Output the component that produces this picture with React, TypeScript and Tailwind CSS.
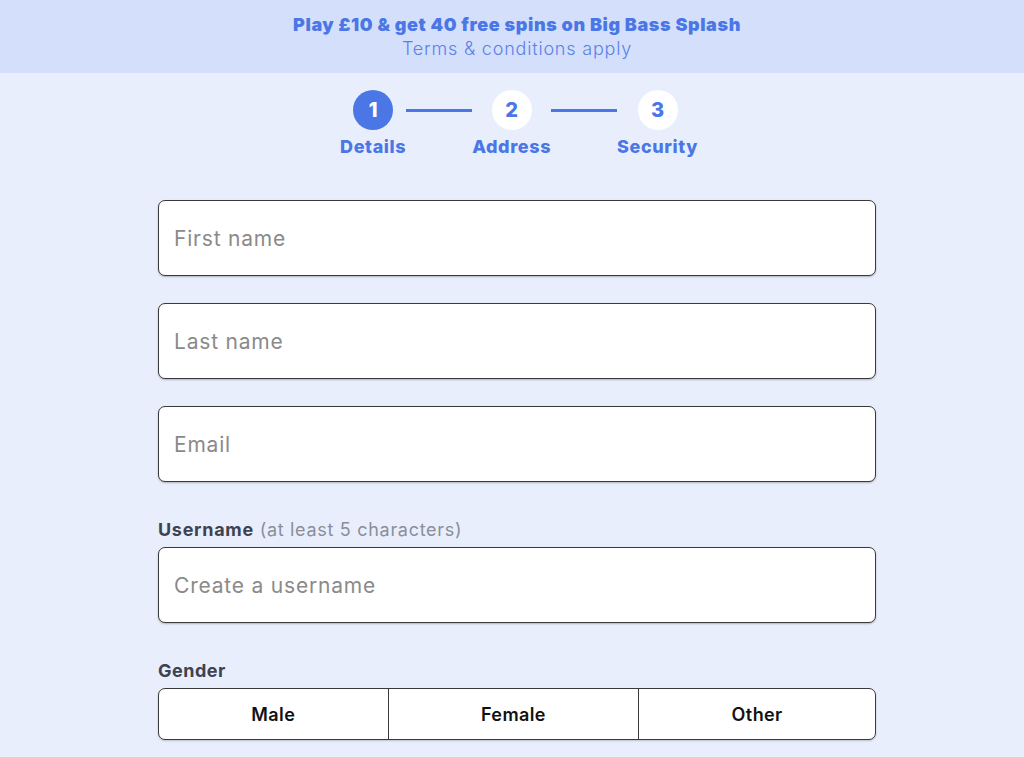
const steps = [
  { num: "1", label: "Details", active: true },
  { num: "2", label: "Address", active: false },
  { num: "3", label: "Security", active: false },
];

const genders = ["Male", "Female", "Other"];

const Field = ({ placeholder }: { placeholder: string }) => (
  <input
    type="text"
    placeholder={placeholder}
    className="w-full h-[76px] rounded-[7px] border border-[#3a3a3a] bg-white px-[15px] text-[21px] tracking-[0.8px] text-[#222] placeholder:text-[#8a8a8a] shadow-[0_1px_2px_rgba(0,0,0,0.25)] outline-none"
  />
);

const App = () => {
  return (
    <div
      className="min-h-[757px] bg-[#e9eefd]"
      style={{ fontFamily: '"Inter", "Open Sans", sans-serif' }}
    >
      {/* Promo banner */}
      <div className="h-[73px] bg-[#d4dffb] pl-[10px] pt-[12px] text-center">
        <p className="text-[18px] leading-[26px] font-black text-[#4a76e6] tracking-[0.6px]">
          Play £10 &amp; get 40 free spins on Big Bass Splash
        </p>
        <p className="text-[18px] leading-[21px] font-light text-[#5a82e6] tracking-[0.8px]">
          Terms &amp; conditions apply
        </p>
      </div>

      {/* Stepper */}
      <div className="flex justify-center items-start pl-[14px] pt-[17px]">
        {steps.map((step, i) => (
          <div key={step.num} className="flex items-start">
            {i > 0 && <div className="w-[66px] h-[3px] mt-[19px] bg-[#4a76e6]" />}
            <div className="flex flex-col items-center">
              <div
                className={
                  step.active
                    ? "w-[40px] h-[40px] rounded-full bg-[#4a76e6] text-white flex items-center justify-center text-[20px] font-extrabold"
                    : "w-[40px] h-[40px] rounded-full bg-white text-[#4a76e6] flex items-center justify-center text-[20px] font-extrabold"
                }
              >
                {step.num}
              </div>
              <span className="mt-[6px] text-[18px] leading-[22px] font-extrabold tracking-[0.6px] text-[#4a76e6]">
                {step.label}
              </span>
            </div>
          </div>
        ))}
      </div>

      {/* Form */}
      <div className="flex justify-center pl-[10px] pt-[42px]">
        <form className="w-[718px] flex flex-col">
          <div className="flex flex-col gap-[27px]">
            <Field placeholder="First name" />
            <Field placeholder="Last name" />
            <Field placeholder="Email" />
          </div>

          <label className="mt-[37px] mb-[6px] text-[18px] leading-[22px] tracking-[0.7px] text-[#3d4350]">
            <span className="font-bold">Username</span>{" "}
            <span className="text-[#8a8f99]">(at least 5 characters)</span>
          </label>
          <Field placeholder="Create a username" />

          <label className="mt-[37px] mb-[6px] text-[18px] leading-[22px] tracking-[0.5px] font-bold text-[#3d4350]">
            Gender
          </label>
          <div className="flex h-[52px] rounded-[7px] border border-[#3a3a3a] bg-white overflow-hidden shadow-[0_1px_2px_rgba(0,0,0,0.2)]">
            {genders.map((g, i) => (
              <button
                key={g}
                type="button"
                className={
                  i > 0
                    ? "flex-auto border-l border-[#3a3a3a] text-[18px] font-semibold tracking-[0.4px] text-[#111]"
                    : "flex-auto text-[18px] font-semibold tracking-[0.4px] text-[#111]"
                }
              >
                {g}
              </button>
            ))}
          </div>
        </form>
      </div>
    </div>
  );
};

export default App;
